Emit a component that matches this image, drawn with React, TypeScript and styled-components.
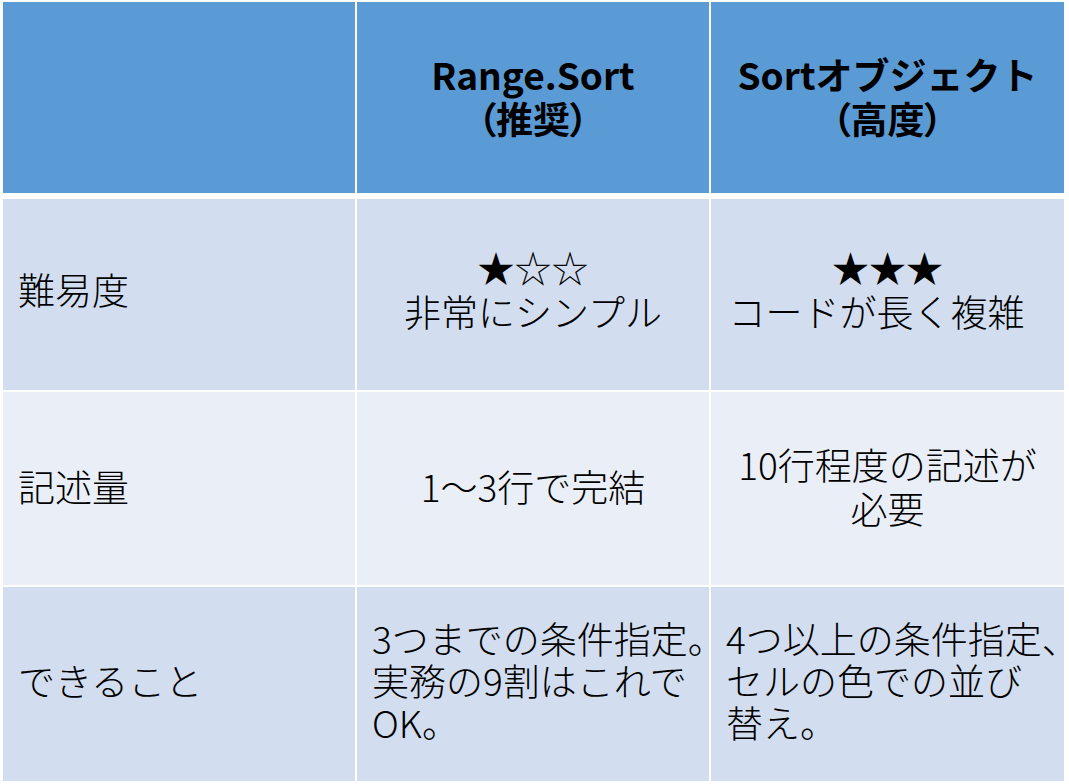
import React from 'react';
import styled, { createGlobalStyle } from 'styled-components';

const GlobalStyle = createGlobalStyle`
  html, body {
    margin: 0;
    padding: 0;
    background: #ffffff;
  }
  body {
    font-family: 'Noto Sans CJK JP', 'Noto Sans', sans-serif;
    color: #000000;
  }
`;

const Table = styled.div`
  display: flex;
  flex-direction: column;
  gap: 2px;
  padding: 2px 0 0 3px;
  width: 1061px;
`;

const Row = styled.div<{ $height: number; $header?: boolean }>`
  display: grid;
  grid-template-columns: 352px 352px 353px;
  column-gap: 2px;
  height: ${(p) => p.$height}px;
  margin-bottom: ${(p) => (p.$header ? 4 : 0)}px;
`;

const Cell = styled.div<{
  $tone: 'head' | 'dark' | 'light';
  $align?: 'left' | 'center';
  $lift?: number;
  $leading?: number;
}>`
  display: flex;
  flex-direction: column;
  justify-content: center;
  align-items: ${(p) => (p.$align === 'left' ? 'flex-start' : 'center')};
  text-align: ${(p) => (p.$align === 'left' ? 'left' : 'center')};
  padding: 0 15px ${(p) => (p.$lift ?? 0) * 2}px;
  background: ${(p) =>
    p.$tone === 'head' ? '#5b9bd5' : p.$tone === 'dark' ? '#d2deef' : '#eaeff7'};
  font-size: 37px;
  font-weight: ${(p) => (p.$tone === 'head' ? 700 : 300)};
  line-height: ${(p) => p.$leading ?? 44}px;
  white-space: nowrap;
  overflow: visible;
`;

const Line = styled.span<{ $shiftLeft?: number }>`
  display: block;
  padding-right: ${(p) => (p.$shiftLeft ?? 0) * 2}px;
`;

const Paren = styled(Line)`
  font-feature-settings: 'palt';
`;

type RowData = {
  label: string;
  left: string[];
  right: string[];
  align?: 'left' | 'center';
  height: number;
  lift: number;
  leading: number;
};

const rows: RowData[] = [
  {
    label: '難易度',
    left: ['★☆☆', '非常にシンプル'],
    right: ['★★★', 'コードが長く複雑'],
    height: 191,
    lift: 6,
    leading: 44,
  },
  {
    label: '記述量',
    left: ['1〜3行で完結'],
    right: ['10行程度の記述が', '必要'],
    height: 193,
    lift: 3,
    leading: 44,
  },
  {
    label: 'できること',
    left: ['3つまでの条件指定。', '実務の9割はこれで', 'OK。'],
    right: ['4つ以上の条件指定、', 'セルの色での並び', '替え。'],
    align: 'left',
    height: 194,
    lift: 4,
    leading: 42,
  },
];

const App: React.FC = () => {
  return (
    <>
      <GlobalStyle />
      <Table>
        <Row $height={191} $header>
          <Cell $tone="head" />
          <Cell $tone="head" $lift={2}>
            <Line>Range.Sort</Line>
            <Paren>（推奨）</Paren>
          </Cell>
          <Cell $tone="head" $lift={2}>
            <Line>Sortオブジェクト</Line>
            <Paren>（高度）</Paren>
          </Cell>
        </Row>
        {rows.map((row, i) => {
          const tone = i % 2 === 0 ? 'dark' : 'light';
          return (
            <Row key={row.label} $height={row.height}>
              <Cell $tone={tone} $align="left" $lift={row.lift}>
                <Line>{row.label}</Line>
              </Cell>
              <Cell $tone={tone} $align={row.align} $lift={row.lift} $leading={row.leading}>
                {row.left.map((t) => (
                  <Line key={t}>{t}</Line>
                ))}
              </Cell>
              <Cell $tone={tone} $align={row.align} $lift={row.lift} $leading={row.leading}>
                {row.right.map((t) => (
                  <Line key={t} $shiftLeft={t === 'コードが長く複雑' ? 11 : 0}>
                    {t}
                  </Line>
                ))}
              </Cell>
            </Row>
          );
        })}
      </Table>
    </>
  );
};

export default App;
